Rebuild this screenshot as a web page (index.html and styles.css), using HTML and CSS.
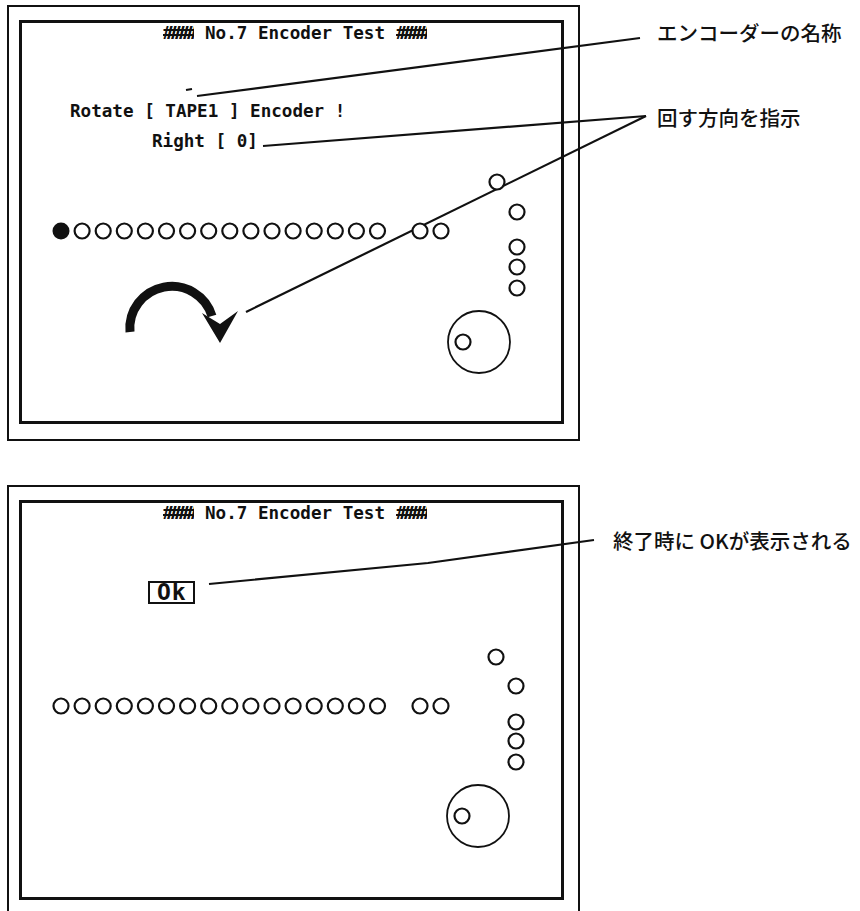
FILE: index.html
```html
<!DOCTYPE html>
<html lang="ja">
<head>
<meta charset="utf-8">
<title>No.7 Encoder Test</title>
<link rel="stylesheet" href="styles.css">
</head>
<body>
<main class="page">
  <section class="figure figure--running">
    <div class="screen-outer">
      <div class="screen-inner">
        <div class="title"><span class="hash">########</span> No.7 Encoder Test <span class="hash">########</span></div>
        <div class="msg msg--rotate">Rotate [ TAPE1 ] Encoder !</div>
        <div class="msg msg--dir">Right [ 0]</div>
      </div>
    </div>
    <svg class="overlay overlay--running" viewBox="0 0 860 480" width="860" height="480" aria-hidden="true">
      <g class="leaders">
        <line x1="186" y1="90" x2="192" y2="89" stroke-width="2"/>
        <line x1="197" y1="96" x2="640" y2="38"/>
        <line x1="263" y1="146" x2="646" y2="116"/>
        <line x1="246" y1="312" x2="646" y2="116"/>
      </g>
      <g class="leds">
        <circle class="led-on" cx="61" cy="231" r="8.5"/>
        <circle cx="82.1" cy="231" r="7.5"/>
        <circle cx="103.2" cy="231" r="7.5"/>
        <circle cx="124.3" cy="231" r="7.5"/>
        <circle cx="145.4" cy="231" r="7.5"/>
        <circle cx="166.5" cy="231" r="7.5"/>
        <circle cx="187.6" cy="231" r="7.5"/>
        <circle cx="208.7" cy="231" r="7.5"/>
        <circle cx="229.8" cy="231" r="7.5"/>
        <circle cx="250.9" cy="231" r="7.5"/>
        <circle cx="272" cy="231" r="7.5"/>
        <circle cx="293.1" cy="231" r="7.5"/>
        <circle cx="314.2" cy="231" r="7.5"/>
        <circle cx="335.3" cy="231" r="7.5"/>
        <circle cx="356.4" cy="231" r="7.5"/>
        <circle cx="377.5" cy="231" r="7.5"/>
        <circle cx="420" cy="231" r="7.5"/>
        <circle cx="441" cy="231" r="7.5"/>
        <circle cx="497" cy="182" r="7.5"/>
        <circle cx="517" cy="212" r="7.5"/>
        <circle cx="517" cy="247" r="7.5"/>
        <circle cx="517" cy="267" r="7.5"/>
        <circle cx="517" cy="288" r="7.5"/>
        <circle class="knob" cx="479" cy="342" r="31"/>
        <circle cx="463" cy="342" r="7.5"/>
      </g>
      <g class="rotate-arrow">
        <path d="M 130 332 A 42 42 0 0 1 212 316" />
        <polygon points="202,313 220,324 238,311 220,343"/>
      </g>
    </svg>
    <p class="callout callout--name">エンコーダーの名称</p>
    <p class="callout callout--dir">回す方向を指示</p>
  </section>

  <section class="figure figure--done">
    <div class="screen-outer screen-outer--open">
      <div class="screen-inner screen-inner--done">
        <div class="title"><span class="hash">########</span> No.7 Encoder Test <span class="hash">########</span></div>
        <div class="ok-box">Ok</div>
      </div>
    </div>
    <svg class="overlay overlay--done" viewBox="0 0 860 431" width="860" height="431" aria-hidden="true">
      <g class="leaders">
        <polyline points="209,104 428,83 594,60"/>
      </g>
      <g class="leds">
        <circle cx="61" cy="226" r="7.5"/>
        <circle cx="82.1" cy="226" r="7.5"/>
        <circle cx="103.2" cy="226" r="7.5"/>
        <circle cx="124.3" cy="226" r="7.5"/>
        <circle cx="145.4" cy="226" r="7.5"/>
        <circle cx="166.5" cy="226" r="7.5"/>
        <circle cx="187.6" cy="226" r="7.5"/>
        <circle cx="208.7" cy="226" r="7.5"/>
        <circle cx="229.8" cy="226" r="7.5"/>
        <circle cx="250.9" cy="226" r="7.5"/>
        <circle cx="272" cy="226" r="7.5"/>
        <circle cx="293.1" cy="226" r="7.5"/>
        <circle cx="314.2" cy="226" r="7.5"/>
        <circle cx="335.3" cy="226" r="7.5"/>
        <circle cx="356.4" cy="226" r="7.5"/>
        <circle cx="377.5" cy="226" r="7.5"/>
        <circle cx="420" cy="226" r="7.5"/>
        <circle cx="441" cy="226" r="7.5"/>
        <circle cx="496" cy="177" r="7.5"/>
        <circle cx="516" cy="206" r="7.5"/>
        <circle cx="516" cy="242" r="7.5"/>
        <circle cx="516" cy="261" r="7.5"/>
        <circle cx="516" cy="282" r="7.5"/>
        <circle class="knob" cx="478" cy="336" r="31"/>
        <circle cx="462" cy="336" r="7.5"/>
      </g>
    </svg>
    <p class="callout callout--ok">終了時に OKが表示される</p>
  </section>
</main>
</body>
</html>
```

FILE: styles.css
```css
html, body {
  margin: 0;
  padding: 0;
  background: #ffffff;
  overflow: hidden;
}

.page {
  width: 860px;
  height: 911px;
  display: flex;
  flex-direction: column;
}

.figure {
  position: relative;
  flex: none;
}

.figure--running {
  height: 480px;
}

.figure--done {
  height: 431px;
  overflow: hidden;
}

.screen-outer {
  box-sizing: border-box;
  width: 573px;
  height: 436px;
  margin: 5px 0 0 7px;
  padding: 13px 0 0 10px;
  border: 2px solid #111;
}

.screen-outer--open {
  height: 445px;
}

.screen-inner {
  box-sizing: border-box;
  width: 545px;
  height: 404px;
  border: 3px solid #111;
  font-family: "DejaVu Sans Mono", "Liberation Mono", monospace;
  font-weight: bold;
  font-size: 17.6px;
  line-height: 20px;
  color: #111;
}

.screen-inner--done {
  height: 400px;
}

.title,
.msg {
  white-space: pre;
}

.title {
  text-align: center;
  padding-left: 7px;
}

.hash {
  display: inline-block;
  width: 3ch;
  overflow: hidden;
  vertical-align: top;
  letter-spacing: -6.6px;
  white-space: nowrap;
}

.msg--rotate {
  margin-top: 58px;
  padding-left: 48px;
}

.msg--dir {
  margin-top: 10px;
  padding-left: 130px;
}

.ok-box {
  display: inline-block;
  box-sizing: border-box;
  height: 23px;
  margin: 58px 0 0 126px;
  padding: 0 6px 0 7px;
  border: 2px solid #111;
  font-size: 23px;
  line-height: 19px;
  letter-spacing: 1px;
}

.overlay {
  position: absolute;
  left: 0;
  top: 0;
  pointer-events: none;
}

.leaders line,
.leaders polyline {
  stroke: #111;
  stroke-width: 2.2;
  fill: none;
}

.leds circle {
  fill: #fff;
  stroke: #111;
  stroke-width: 2.2;
}

.leds circle.led-on {
  fill: #111;
  stroke: none;
}

.leds circle.knob {
  fill: none;
  stroke-width: 1.8;
}

.rotate-arrow path {
  fill: none;
  stroke: #111;
  stroke-width: 9;
}

.rotate-arrow polygon {
  fill: #111;
}

.callout {
  position: absolute;
  margin: 0;
  font-family: "Noto Sans CJK JP", "Noto Sans", sans-serif;
  font-weight: 500;
  font-size: 20.5px;
  line-height: 24px;
  color: #111;
  white-space: nowrap;
}

.callout--name {
  left: 657px;
  top: 20px;
}

.callout--dir {
  left: 657px;
  top: 105px;
}

.callout--ok {
  left: 613px;
  top: 48px;
}
```
